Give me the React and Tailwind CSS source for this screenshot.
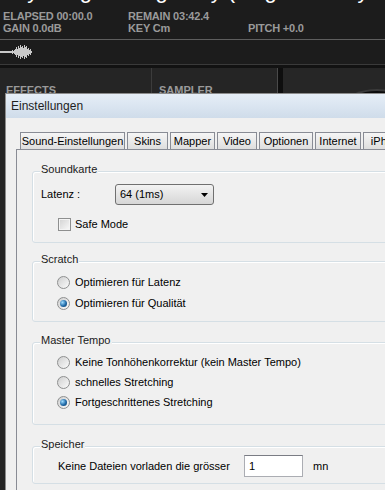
import React from 'react';

const tabs = [
    { label: 'Sound-Einstellungen', w: 'w-[105px]' },
    { label: 'Skins', w: 'w-[41px]' },
    { label: 'Mapper', w: 'w-[45px]' },
    { label: 'Video', w: 'w-[40px]' },
    { label: 'Optionen', w: 'w-[54px]' },
    { label: 'Internet', w: 'w-[46px]' },
    { label: 'iPhone', w: 'w-[50px]' },
];

const waveBars = [1, 1, 1, 1, 1, 1, 1, 1, 1, 1, 1, 1, 2, 1, 2, 3, 5, 3, 6, 4, 7, 5, 6, 4, 7, 5, 6, 3, 4, 2, 3, 1];

const Waveform = () => (
    <svg width="34" height="16" viewBox="0 0 34 16" className="mt-[4px]">
        {waveBars.map((h, i) => (
            <line key={i} x1={i + 0.5} x2={i + 0.5} y1={8 - h} y2={8 + h} stroke="#c9c9c9" strokeWidth="1" />
        ))}
    </svg>
);

const Radio = ({ checked }) => (
    <span className="flex h-[13px] w-[13px] shrink-0 items-center justify-center rounded-full border border-[#8e8f8f] bg-gradient-to-br from-[#cfcfcf] to-[#fbfbfb]">
        {checked && (
            <span className="h-[7px] w-[7px] rounded-full bg-[radial-gradient(circle_at_35%_35%,#9fdcff,#1f6aa8_55%,#0c355f)]" />
        )}
    </span>
);

const Option = ({ checked, children }) => (
    <div className="flex h-[20px] items-center gap-[5px] pl-[24px]">
        <Radio checked={checked} />
        <span>{children}</span>
    </div>
);

// Windows-style group box with its caption sitting on the top border
const Group = ({ title, className, children }) => (
    <div className={`relative w-[372px] rounded-[3px] border border-[#d5dfe5] shadow-[inset_1px_1px_0_#ffffff] ${className}`}>
        <span className="absolute -top-[10px] left-[7px] bg-[#f0f0f0] px-[1px] leading-[14px] text-[#1a1a1a]">
            {title}
        </span>
        {children}
    </div>
);

const App = () => {
    return (
        <div className="relative h-[490px] w-[385px] overflow-hidden bg-[#161616] font-['Liberation_Sans',Arial,sans-serif]">
            {/* DJ deck behind the dialog */}
            <div className="flex h-full flex-col bg-[#1c1c1c]">
                <div className="h-[10px] overflow-hidden">
                    <div className="-mt-[20px] whitespace-nowrap pl-[4px] text-[22px] leading-[22px] text-white">
                        Jay Dragon - Big Lady (Original Party Mix)
                    </div>
                </div>

                <div className="grid grid-cols-[125px_120px_1fr] px-[3px] text-[11px] font-bold leading-[12px] tracking-[-0.2px] text-[#9a9a9a]">
                    <span>ELAPSED 00:00.0</span>
                    <span>REMAIN 03:42.4</span>
                    <span />
                    <span>GAIN 0.0dB</span>
                    <span>KEY Cm</span>
                    <span>PITCH +0.0</span>
                </div>

                <div className="mt-[5px] h-px bg-[#5e5e5e]" />
                <div className="h-[24px]">
                    <Waveform />
                </div>
                <div className="h-px bg-[#3a3a3a]" />
                <div className="h-[3px] bg-[#121212]" />

                <div className="flex flex-1">
                    <div className="w-[152px] border-r border-[#3c3c3c] bg-[#252525] pl-[6px] pt-[16px] text-[11px] font-bold leading-[12px] text-[#9a9a9a]">
                        EFFECTS
                    </div>
                    <div className="w-[125px] bg-[#252525] pl-[7px] pt-[16px] text-[11px] font-bold leading-[12px] text-[#9a9a9a]">
                        SAMPLER
                    </div>
                    <div className="w-[6px] border-l border-[#4a4a4a] bg-[#0e0e0e]" />
                    <div className="flex-1 overflow-hidden bg-[#262626]">
                        <svg width="102" height="40" viewBox="0 0 102 40">
                            <circle cx="94" cy="82" r="61" fill="#3a3a3a" />
                            <circle cx="94" cy="82" r="59" fill="#0b0b0b" />
                        </svg>
                    </div>
                </div>
            </div>

            {/* Settings dialog */}
            <div className="absolute left-[5px] top-[93px] flex h-[420px] w-[400px] flex-col border-l border-t border-[#8c8c8c] text-[11px] text-black">
                <div className="flex h-[24px] items-center bg-gradient-to-b from-[#e6eef7] to-[#cfdcea] pl-[5px] text-[12px] text-[#1e1e1e]">
                    Einstellungen
                </div>

                <div className="flex-1 bg-[#f0f0f0] pl-[10px] pt-[14px]">
                    <div className="ml-[4px] flex h-[17px] gap-[2px]">
                        {tabs.map((t) => (
                            <div
                                key={t.label}
                                className={`${t.w} flex shrink-0 items-center justify-center overflow-hidden whitespace-nowrap border border-b-0 border-[#898c95] bg-gradient-to-b from-[#f6f6f6] to-[#dedede]`}
                            >
                                {t.label}
                            </div>
                        ))}
                    </div>

                    <div className="h-full border-l border-t border-[#898c95] bg-[#f0f0f0] pl-[15px] pt-[21px]">
                        <Group title="Soundkarte" className="h-[72px]">
                            <div className="flex items-center pl-[8px] pt-[12px]">
                                <span className="w-[74px]">Latenz :</span>
                                <div className="flex h-[21px] w-[99px] items-center justify-between rounded-[3px] border border-[#707070] bg-gradient-to-b from-[#f3f3f3] to-[#d6d6d6] pl-[4px] pr-[5px]">
                                    <span>64 (1ms)</span>
                                    <svg width="7" height="4" viewBox="0 0 7 4">
                                        <path d="M0 0h7L3.5 4z" fill="#000" />
                                    </svg>
                                </div>
                            </div>
                            <div className="mt-[11px] flex items-center gap-[4px] pl-[25px]">
                                <span className="h-[13px] w-[13px] border border-[#8e8f8f] bg-gradient-to-br from-[#d2d2d2] to-[#fafafa] shadow-[inset_0_0_0_1px_#f4f4f4]" />
                                <span>Safe Mode</span>
                            </div>
                        </Group>

                        <Group title="Scratch" className="mt-[18px] h-[61px]">
                            <div className="flex flex-col gap-[1px] pt-[10px]">
                                <Option>Optimieren für Latenz</Option>
                                <Option checked>Optimieren für Qualität</Option>
                            </div>
                        </Group>

                        <Group title="Master Tempo" className="mt-[20px] h-[83px]">
                            <div className="flex flex-col pt-[9px]">
                                <Option>Keine Tonhöhenkorrektur (kein Master Tempo)</Option>
                                <Option>schnelles Stretching</Option>
                                <Option checked>Fortgeschrittenes Stretching</Option>
                            </div>
                        </Group>

                        <Group title="Speicher" className="mt-[21px] h-[38px]">
                            <div className="flex items-center pl-[25px] pt-[8px]">
                                <span className="w-[186px]">Keine Dateien vorladen die grösser</span>
                                <div className="flex h-[22px] w-[59px] items-center border border-[#abadb3] border-t-[#7a7c84] bg-white pl-[4px]">
                                    1
                                </div>
                                <span className="pl-[10px]">mn</span>
                            </div>
                        </Group>
                    </div>
                </div>
            </div>
        </div>
    );
};

export default App;
